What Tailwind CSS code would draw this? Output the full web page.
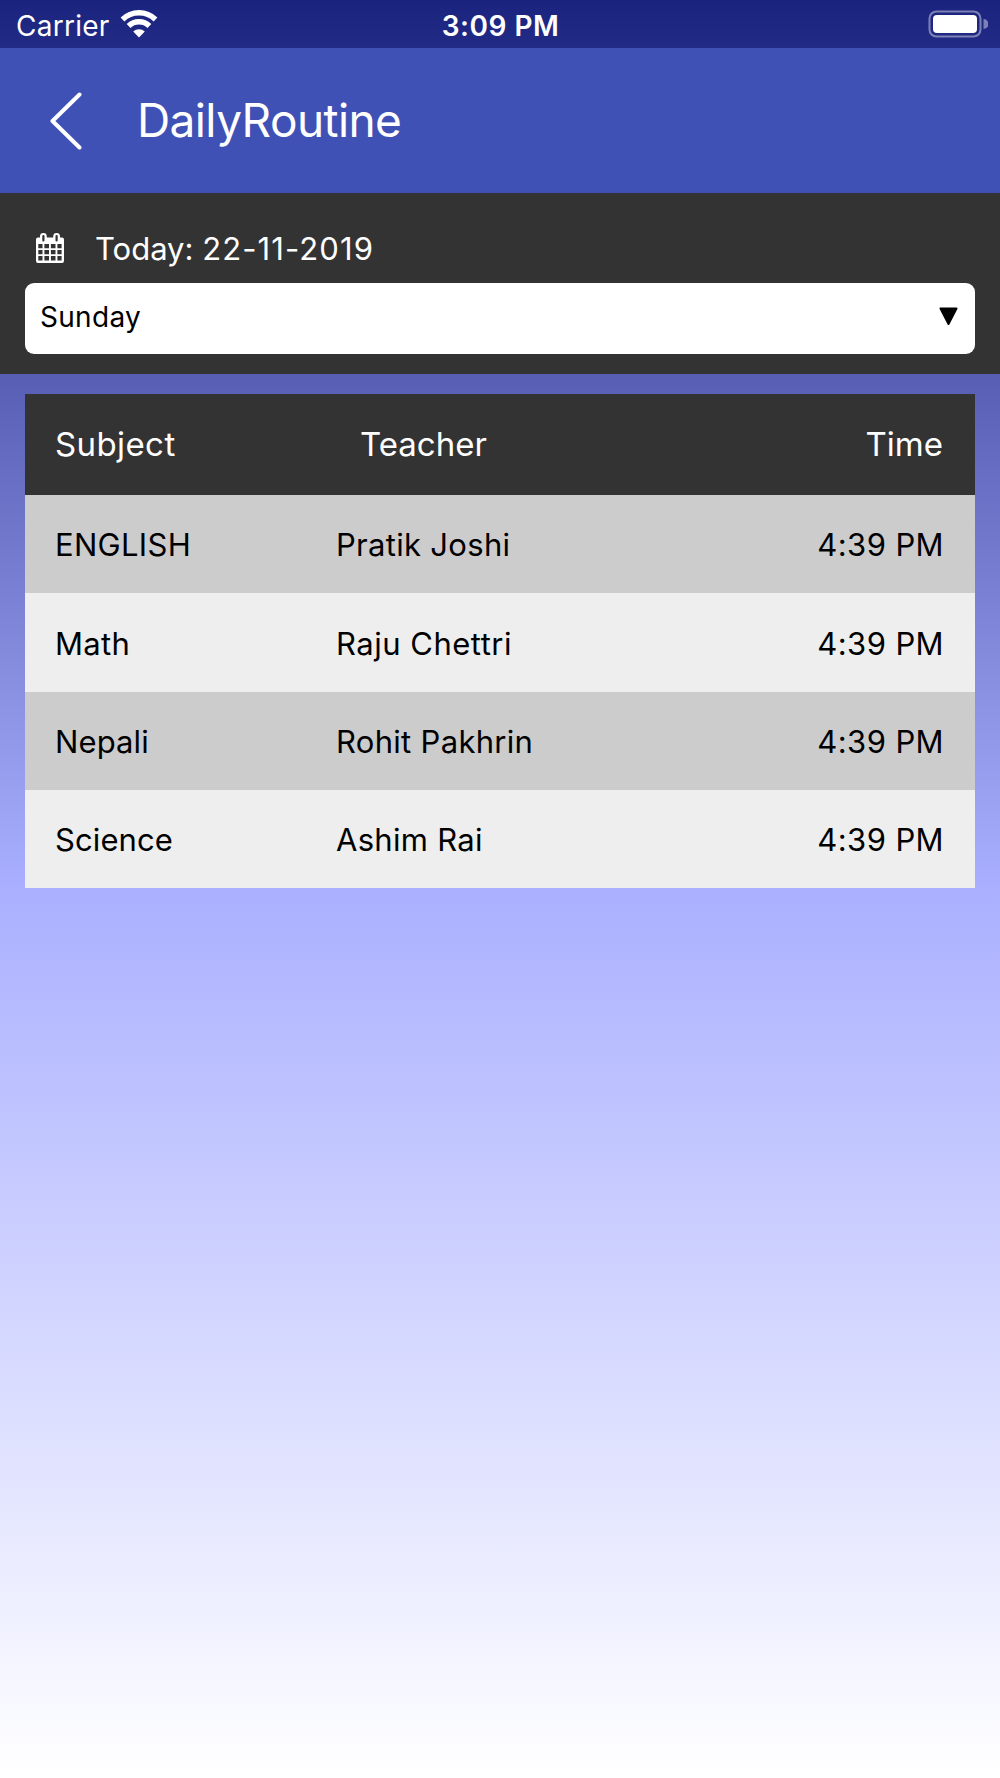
<!DOCTYPE html>
<html lang="en">
  <head>
    <meta charset="UTF-8" />
    <meta name="viewport" content="width=device-width, initial-scale=1.0" />
    <title>DailyRoutine</title>
    <script src="https://cdn.jsdelivr.net/npm/@tailwindcss/browser@4"></script>
  </head>

  <body class="font-['Inter',sans-serif]">
    <main
      class="h-[1778px] w-[1000px] overflow-hidden bg-[linear-gradient(180deg,#1a237e_0%,#aab0ff_50%,#ffffff_100%)]"
    >
      <!-- Status bar -->
      <section class="grid h-12 grid-cols-3 items-center pt-[3px] text-white">
        <div class="flex items-center gap-[10px] pl-4">
          <span class="text-[28px] tracking-[0.25px]">Carrier</span>
          <svg class="-mt-1 h-[28px] w-[38px]" viewBox="0 0 38 28" fill="none">
            <path d="M2.5 9.5 A23.5 23.5 0 0 1 35.5 9.5" stroke="#fff" stroke-width="5.4" />
            <path d="M8.6 16 A14.8 14.8 0 0 1 29.4 16" stroke="#fff" stroke-width="5.4" />
            <path d="M13.2 21.6 A8.4 8.4 0 0 1 24.8 21.6 L19 27.4 Z" fill="#fff" />
          </svg>
        </div>
        <span class="pl-px text-center text-[28px] font-semibold tracking-[0.5px]">3:09 PM</span>
        <div class="flex justify-end pr-3">
          <svg class="-mt-[3px] h-[28px] w-[60px]" viewBox="0 0 60 28">
            <rect x="1.5" y="1.5" width="51" height="25" rx="7" fill="none" stroke="#fff" stroke-opacity=".42" stroke-width="2" />
            <rect x="5" y="5" width="44" height="18" rx="4" fill="#fff" />
            <path d="M55.5 9 a5 5 0 0 1 0 10 Z" fill="#fff" fill-opacity=".42" />
          </svg>
        </div>
      </section>

      <!-- Header -->
      <header class="flex h-[145px] items-center bg-[#3f51b5] pl-[50px] text-white">
        <svg class="h-[58px] w-[33px]" viewBox="0 0 33 58" fill="none">
          <path d="M29.5 2.5 L2.5 29 L29.5 55.5" stroke="#fff" stroke-width="4" stroke-linecap="round" stroke-linejoin="round" />
        </svg>
        <h1 class="-mt-px pl-[54px] text-[46px] tracking-[-0.6px]">DailyRoutine</h1>
      </header>

      <!-- Date and day picker -->
      <section class="h-[181px] bg-[#333333] px-[25px] pt-[30px]">
        <div class="flex h-[52px] items-center pl-[10px] text-white">
          <svg class="-mt-[2px] h-[32px] w-[30px]" viewBox="0 0 30 32">
            <path
              fill="#fff"
              fill-rule="evenodd"
              d="M3 5.5 H5 V4.5 a3.3 3.3 0 0 1 6.8 0 V5.5 H18.2 V4.5 a3.3 3.3 0 0 1 6.8 0 V5.5 H27 a2 2 0 0 1 2 2 V29 a2 2 0 0 1 -2 2 H3 a2 2 0 0 1 -2 -2 V7.5 a2 2 0 0 1 2 -2 Z
                 M7.3 4 V8.5 a1.1 1.1 0 0 0 2.2 0 V4 a1.1 1.1 0 0 0 -2.2 0 Z
                 M20.5 4 V8.5 a1.1 1.1 0 0 0 2.2 0 V4 a1.1 1.1 0 0 0 -2.2 0 Z
                 M3.3 12 h4.2 v4.2 h-4.2 Z M9.4 12 h4.6 v4.2 h-4.6 Z M15.9 12 h4.6 v4.2 h-4.6 Z M22.4 12 h4.2 v4.2 h-4.2 Z
                 M3.3 18 h4.2 v4.2 h-4.2 Z M9.4 18 h4.6 v4.2 h-4.6 Z M15.9 18 h4.6 v4.2 h-4.6 Z M22.4 18 h4.2 v4.2 h-4.2 Z
                 M3.3 24 h4.2 v4.4 h-4.2 Z M9.4 24 h4.6 v4.4 h-4.6 Z M15.9 24 h4.6 v4.4 h-4.6 Z M22.4 24 h4.2 v4.4 h-4.2 Z"
            />
          </svg>
          <span class="pl-[30px] text-[31px]">Today: <span class="tracking-[1.1px]">22-11-2019</span></span>
        </div>
        <div class="mt-2 flex h-[71px] items-center justify-between rounded-[9px] bg-white pr-[17px] pb-1 pl-[15px]">
          <span class="text-[28px] tracking-[0.3px]">Sunday</span>
          <svg class="h-[19px] w-[19px]" viewBox="0 0 19 19">
            <path d="M1.5 1.5 H17.5 L9.5 17 Z" fill="#000" stroke="#000" stroke-width="2" stroke-linejoin="round" />
          </svg>
        </div>
      </section>

      <!-- Routine table -->
      <section class="mx-[25px] mt-5 text-[31px] tracking-[0.3px] text-black">
        <div class="grid h-[101px] grid-cols-[305px_1fr_auto] items-center bg-[#333333] pt-px pr-8 pl-[30px] text-[33px] text-white">
          <span class="tracking-[0.4px]">Subject</span>
          <span class="tracking-normal">Teacher</span>
          <span class="tracking-normal">Time</span>
        </div>
        <div class="grid h-[98.25px] grid-cols-[281px_1fr_auto] items-center bg-[#cccccc] pt-[3px] pr-[31px] pl-[30px]">
          <span>ENGLISH</span>
          <span>Pratik Joshi</span>
          <span class="tracking-[0.4px]">4:39 PM</span>
        </div>
        <div class="grid h-[98.25px] grid-cols-[281px_1fr_auto] items-center bg-[#eeeeee] pt-[3px] pr-[31px] pl-[30px]">
          <span>Math</span>
          <span class="tracking-[0.5px]">Raju Chettri</span>
          <span class="tracking-[0.4px]">4:39 PM</span>
        </div>
        <div class="grid h-[98.25px] grid-cols-[281px_1fr_auto] items-center bg-[#cccccc] pt-[3px] pr-[31px] pl-[30px]">
          <span class="tracking-[0.1px]">Nepali</span>
          <span>Rohit Pakhrin</span>
          <span class="tracking-[0.4px]">4:39 PM</span>
        </div>
        <div class="grid h-[98.25px] grid-cols-[281px_1fr_auto] items-center bg-[#eeeeee] pt-[3px] pr-[31px] pl-[30px]">
          <span class="tracking-[0.1px]">Science</span>
          <span>Ashim Rai</span>
          <span class="tracking-[0.4px]">4:39 PM</span>
        </div>
      </section>
    </main>
  </body>
</html>
